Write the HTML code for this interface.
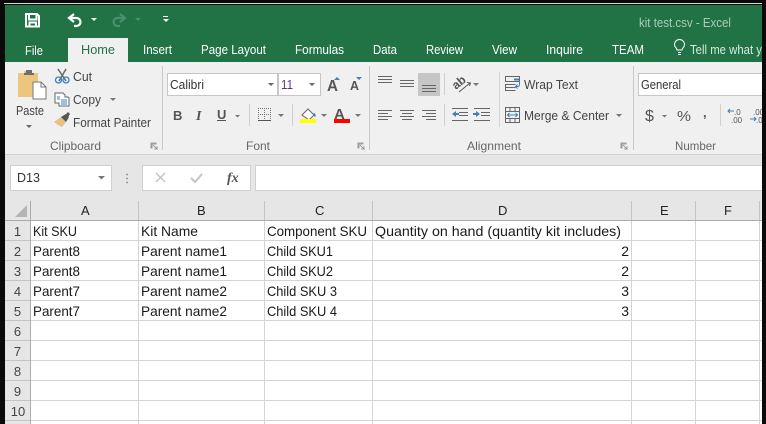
<!DOCTYPE html>
<html><head><meta charset="utf-8">
<style>
html,body{margin:0;padding:0;background:#000;width:766px;height:424px;overflow:hidden}
svg{display:block}
text{font-family:"Liberation Sans",sans-serif;font-size:12px;fill:#262626}
.r{fill:#444;font-size:13px}
.w{fill:#fff;font-size:13px}
.g{fill:#666;font-size:12px}
.c{fill:#1a1a1a;font-size:14px}
.h{fill:#222;font-size:13px}
</style></head><body>
<svg width="766" height="424" viewBox="0 0 766 424" xmlns="http://www.w3.org/2000/svg" shape-rendering="crispEdges">
<rect width="766" height="424" fill="#0a0a0a"/>
<rect x="4" y="3" width="758" height="1" fill="#d8d8d8"/>
<rect x="5" y="5" width="757" height="57" fill="#217346"/>
<rect x="5" y="62" width="757" height="92" fill="#f0f0f0"/>
<rect x="5" y="154" width="757" height="1" fill="#d2d2d2"/>
<rect x="5" y="155" width="757" height="46" fill="#e6e6e6"/>
<rect x="68" y="38" width="60" height="24" fill="#f0f0f0"/>

<g shape-rendering="auto">
<!-- save -->
<path d="M26 14h11l2 2v10.500H26z M29 14v5.500h7.500V14 M29.500 26.500v-4h6.500v4" fill="none" stroke="#fff" stroke-width="2"/>
<!-- undo -->
<path d="M74 14l-5 4 5 4 M69 18h7.500a4 4 0 0 1 0 8H74" fill="none" stroke="#fff" stroke-width="2.200"/>
<path d="M91 18h6l-3 3z" fill="#fff"/>
<path d="M120 14l5 4-5 4 M125 18h-7.500a4 4 0 0 0 0 8h2.500" fill="none" stroke="#4c8f6c" stroke-width="2.200"/>
<path d="M135 18h6l-3 3z" fill="#4c8f6c"/>
<path d="M163 16h5v1h-5z M163 19h6l-3 3z" fill="#fff"/>
<text x="639" y="27" style="fill:#a9cdb9;font-size:13px" textLength="92" lengthAdjust="spacingAndGlyphs">kit test.csv - Excel</text>

<text class="w" x="25" y="55" textLength="18" lengthAdjust="spacingAndGlyphs">File</text>
<text x="81" y="54" style="fill:#217346;font-size:13px" textLength="34" lengthAdjust="spacingAndGlyphs">Home</text>
<text class="w" x="143" y="54" textLength="29" lengthAdjust="spacingAndGlyphs">Insert</text>
<text class="w" x="201" y="54" textLength="65" lengthAdjust="spacingAndGlyphs">Page Layout</text>
<text class="w" x="295" y="54" textLength="49" lengthAdjust="spacingAndGlyphs">Formulas</text>
<text class="w" x="373" y="54" textLength="24" lengthAdjust="spacingAndGlyphs">Data</text>
<text class="w" x="426" y="54" textLength="37" lengthAdjust="spacingAndGlyphs">Review</text>
<text class="w" x="492" y="54" textLength="25" lengthAdjust="spacingAndGlyphs">View</text>
<text class="w" x="546" y="54" textLength="37" lengthAdjust="spacingAndGlyphs">Inquire</text>
<text class="w" x="612" y="54" textLength="32" lengthAdjust="spacingAndGlyphs">TEAM</text>
<path d="M678 54.500h3 M678 52.500h3 M677 50c0-2-2.500-2.500-2.500-5.500a5 5 0 0 1 10 0c0 3-2.500 3.500-2.500 5.500z" fill="none" stroke="#fff" stroke-width="1"/>
<text x="690" y="54" style="fill:#d8e8df;font-size:13px" textLength="72" lengthAdjust="spacingAndGlyphs">Tell me what y</text>

<!-- Paste -->
<path d="M18 73h6v-2h8v2h6v9H33v15H18z" fill="#ecc67f"/>
<path d="M26 70h6v3h2v2H24v-2h2z" fill="#6d6d6d"/>
<path d="M33 82h8l5 5v12H33z" fill="#fff" stroke="#777" stroke-width="1"/>
<path d="M41 82v5h5" fill="none" stroke="#777"/>
<text class="r" x="16" y="115" textLength="28" lengthAdjust="spacingAndGlyphs">Paste</text>
<path d="M26 125h6l-3 3z" fill="#666"/>

<!-- Cut -->
<path d="M58 69l8 12 M66 69l-7 12" stroke="#666" stroke-width="1.500" fill="none"/>
<circle cx="58.500" cy="80" r="3" fill="none" stroke="#3f7fbf" stroke-width="1.300"/>
<circle cx="66" cy="80" r="3" fill="none" stroke="#3f7fbf" stroke-width="1.300"/>
<text class="r" x="73" y="81" textLength="19" lengthAdjust="spacingAndGlyphs">Cut</text>
<!-- Copy -->
<path d="M55 93h8l2 2v2h3l1 1v8h-10v-3h-4z" fill="#fff" stroke="#666" stroke-width="1"/>
<path d="M57 97h3 M57 99h3 M61 100h6 M61 102h6 M61 104h6" stroke="#3f7fbf" stroke-width="1" fill="none"/>
<text class="r" x="73" y="104" textLength="28" lengthAdjust="spacingAndGlyphs">Copy</text>
<path d="M110 98h6l-3 3z" fill="#777"/>
<!-- Format painter -->
<path d="M54 122l7-5 5 5-4 5-4-2z" fill="#e8c184"/>
<path d="M61 117l5-3 3 3-3 5z" fill="#555"/>
<path d="M65 115l3-3 2 2-2 3z" fill="#555"/>
<text class="r" x="73" y="127" textLength="78" lengthAdjust="spacingAndGlyphs">Format Painter</text>
<text class="g" x="50" y="150" textLength="51" lengthAdjust="spacingAndGlyphs">Clipboard</text>
<path d="M151 143h5v1h-4v4h-1z M153 145l4 4h-3 M157 146v3" fill="none" stroke="#888" stroke-width=".8"/>
</g>

<!-- separators -->
<rect x="162" y="66" width="1" height="84" fill="#c8c8c8"/>
<rect x="369" y="66" width="1" height="84" fill="#c8c8c8"/>
<rect x="633" y="66" width="1" height="84" fill="#c8c8c8"/>
<rect x="499" y="72" width="1" height="55" fill="#d4d4d4"/>
<rect x="444" y="73" width="1" height="22" fill="#d0d0d0"/>
<rect x="444" y="104" width="1" height="22" fill="#d0d0d0"/>
<rect x="249" y="104" width="1" height="22" fill="#d0d0d0"/>
<rect x="292" y="104" width="1" height="22" fill="#d0d0d0"/>
<rect x="720" y="104" width="1" height="22" fill="#d0d0d0"/>

<!-- font boxes -->
<rect x="167.500" y="73.500" width="110" height="22" fill="#fff" stroke="#c6c6c6"/>
<rect x="278.500" y="73.500" width="42" height="22" fill="#fff" stroke="#c6c6c6"/>
<rect x="638.500" y="73.500" width="130" height="22" fill="#fff" stroke="#c6c6c6"/>

<g shape-rendering="auto">
<text x="170" y="89" style="fill:#333;font-size:13px" textLength="34" lengthAdjust="spacingAndGlyphs">Calibri</text>
<path d="M268 83h6l-3 3z M309 83h6l-3 3z" fill="#666"/>
<text x="281" y="89" style="fill:#5b3a7a;font-size:13px" textLength="12" lengthAdjust="spacingAndGlyphs">11</text>
<text x="327" y="91" style="fill:#555;font-size:16px;font-weight:bold" textLength="11" lengthAdjust="spacingAndGlyphs">A</text>
<path d="M334 80h6l-3-3z" fill="#3f7fbf"/>
<text x="350" y="90" style="fill:#555;font-size:13px;font-weight:bold" textLength="9" lengthAdjust="spacingAndGlyphs">A</text>
<path d="M356 77h6l-3 3z" fill="#3f7fbf"/>
<text x="173" y="120" style="fill:#555;font-size:13px;font-weight:bold">B</text>
<text x="196" y="120" style="fill:#555;font-size:14px;font-style:italic;font-family:'Liberation Serif',serif;font-weight:bold">I</text>
<text x="217" y="119" style="fill:#555;font-size:13px;font-weight:bold">U</text>
<rect x="217" y="120" width="9" height="1" fill="#555"/>
<path d="M235 115h5l-2.500 2.500z M278 114h6l-3 3z M321 114h6l-3 3z M355 114h6l-3 3z" fill="#777"/>
<path d="M258.500 108v13M264.500 108v13M270.500 108v13M258 108.500h13M258 114.500h13" stroke="#777" stroke-width="1" stroke-dasharray="1 1" fill="none"/>
<rect x="258" y="120" width="13" height="1" fill="#555"/>
<path d="M302 115l6-6 6 6-5 5z" fill="#fff" stroke="#666" stroke-width="1"/>
<path d="M314 113c2 1 2 3 1 4l-2-2z" fill="#3f7fbf"/>
<rect x="300" y="119" width="16" height="4" fill="#ffff00"/>
<text x="334" y="119" style="fill:#555;font-size:15px;font-weight:bold">A</text>
<rect x="334" y="119" width="16" height="4" fill="#ff0000"/>
<text class="g" x="246" y="150" textLength="24" lengthAdjust="spacingAndGlyphs">Font</text>
<path d="M358 143h5v1h-4v4h-1z M360 145l4 4h-3 M364 146v3" fill="none" stroke="#888" stroke-width=".8"/>
</g>

<!-- alignment -->
<rect x="418" y="73" width="22" height="23" fill="#c6c6c6"/>
<g fill="#666">
<rect x="378" y="76" width="14" height="1"/><rect x="378" y="79" width="14" height="1"/><rect x="378" y="82" width="14" height="1"/>
<rect x="400" y="80" width="14" height="1"/><rect x="400" y="83" width="14" height="1"/><rect x="400" y="86" width="14" height="1"/>
<rect x="422" y="85" width="14" height="1"/><rect x="422" y="88" width="14" height="1"/><rect x="422" y="91" width="14" height="1"/>
<rect x="378" y="110" width="14" height="1"/><rect x="378" y="113" width="10" height="1"/><rect x="378" y="116" width="14" height="1"/><rect x="378" y="119" width="10" height="1"/>
<rect x="400" y="110" width="14" height="1"/><rect x="402" y="113" width="10" height="1"/><rect x="400" y="116" width="14" height="1"/><rect x="402" y="119" width="10" height="1"/>
<rect x="422" y="110" width="14" height="1"/><rect x="426" y="113" width="10" height="1"/><rect x="422" y="116" width="14" height="1"/><rect x="426" y="119" width="10" height="1"/>
<rect x="452" y="108" width="16" height="1"/><rect x="459" y="112" width="9" height="1"/><rect x="459" y="115" width="9" height="1"/><rect x="452" y="120" width="16" height="1"/>
<rect x="474" y="108" width="16" height="1"/><rect x="481" y="112" width="9" height="1"/><rect x="481" y="115" width="9" height="1"/><rect x="474" y="120" width="16" height="1"/>
</g>
<g shape-rendering="auto">
<path d="M452 114l4-3v2h3v2h-3v2z" fill="#3f7fbf"/>
<path d="M480 114l-4-3v2h-3v2h3v2z" fill="#3f7fbf"/>
<text x="0" y="0" transform="translate(456,90) rotate(-40)" style="fill:#555;font-size:12px;font-weight:bold">ab</text>
<path d="M459 92l11-9 M467 82.500l3.500 .5-1 3" fill="none" stroke="#555" stroke-width="1"/>
<path d="M473 83h6l-3 3z M616 114h6l-3 3z" fill="#777"/>
<!-- wrap -->
<path d="M505.500 76.500h14v5h-14z M505.500 84.500h10 M505.500 87.500h10 M505.500 90.500h10 M505.500 84v7" fill="none" stroke="#666" stroke-width="1"/>
<path d="M514 80h5 M514 79h6" stroke="#3f7fbf" stroke-width="1"/>
<path d="M519.500 81v3.500c0 1.500-1 2-2 2h-2 M517.500 84.500l-2 2 2 2" fill="none" stroke="#3f7fbf" stroke-width="1"/>
<text class="r" x="524" y="89" textLength="54" lengthAdjust="spacingAndGlyphs">Wrap Text</text>
<!-- merge -->
<path d="M505.500 107.500h14v15h-14z M505.500 111.500h14 M505.500 118.500h14 M510 107.500v4 M515 107.500v4 M510 118.500v4 M515 118.500v4" fill="none" stroke="#666" stroke-width="1"/>
<path d="M507.500 115h10 M509.500 113l-2 2 2 2 M515.500 113l2 2-2 2" fill="none" stroke="#3f7fbf" stroke-width="1"/>
<text class="r" x="524" y="120" textLength="85" lengthAdjust="spacingAndGlyphs">Merge &amp; Center</text>
<text class="g" x="467" y="150" textLength="54" lengthAdjust="spacingAndGlyphs">Alignment</text>
<path d="M621 143h5v1h-4v4h-1z M623 145l4 4h-3 M627 146v3" fill="none" stroke="#888" stroke-width=".8"/>
<!-- number -->
<text x="641" y="89" style="fill:#333;font-size:13px" textLength="40" lengthAdjust="spacingAndGlyphs">General</text>
<text x="645" y="121" style="fill:#555;font-size:16px">$</text>
<path d="M662 115h5l-2.500 2.500z" fill="#777"/>
<text x="677" y="121" style="fill:#555;font-size:15px" textLength="14" lengthAdjust="spacingAndGlyphs">%</text>
<text x="703" y="117" style="fill:#555;font-size:13px;font-weight:bold">,</text>
<text x="734" y="115" style="fill:#555;font-size:8px">.0</text>
<text x="731" y="123" style="fill:#555;font-size:8px">.00</text>
<path d="M734 111h-6 M730 109l-2 2 2 2" fill="none" stroke="#3f7fbf" stroke-width="1"/>
<text x="753" y="115" style="fill:#555;font-size:8px">.00</text>
<text x="756" y="123" style="fill:#555;font-size:8px">.0</text>
<path d="M750 119h6 M754 117l2 2-2 2" fill="none" stroke="#3f7fbf" stroke-width="1"/>
<text class="g" x="675" y="150" textLength="41" lengthAdjust="spacingAndGlyphs">Number</text>
</g>

<!-- formula bar -->
<rect x="10.500" y="165.500" width="101" height="25" fill="#fff" stroke="#d0d0d0"/>
<rect x="142.500" y="165.500" width="108" height="25" fill="#fff" stroke="#d0d0d0"/>
<rect x="255.500" y="165.500" width="520" height="25" fill="#fff" stroke="#d0d0d0"/>
<g shape-rendering="auto">
<text x="17" y="182" style="fill:#333;font-size:13px" textLength="23" lengthAdjust="spacingAndGlyphs">D13</text>
<path d="M98 176h7l-3.500 3.500z" fill="#777"/>
<path d="M126 174.500h2 M126 178.500h2 M126 182.500h2" stroke="#999" stroke-width="1.500"/>
<path d="M156 173l9 9 M165 173l-9 9" stroke="#c4c4c4" stroke-width="1.500" fill="none"/>
<path d="M191 178l4 4 7-8" stroke="#c4c4c4" stroke-width="2" fill="none"/>
<text x="227" y="182" style="fill:#555;font-size:14px;font-style:italic;font-family:'Liberation Serif',serif;font-weight:bold">fx</text>
</g>

<!-- sheet -->
<rect x="5" y="201" width="757" height="223" fill="#fff"/>
<rect x="5" y="201" width="757" height="19" fill="#e6e6e6"/>
<rect x="5" y="220" width="25" height="204" fill="#e6e6e6"/>
<path d="M15 217L27 205V217z" fill="#b4b4b4" shape-rendering="auto"/>
<rect x="5" y="220" width="757" height="1" fill="#ababab"/>
<rect x="30" y="201" width="1" height="223" fill="#ababab"/>

<g fill="#d4d4d4">
<rect x="31" y="240" width="731" height="1"/><rect x="31" y="260" width="731" height="1"/><rect x="31" y="280" width="731" height="1"/>
<rect x="31" y="300" width="731" height="1"/><rect x="31" y="320" width="731" height="1"/><rect x="31" y="340" width="731" height="1"/>
<rect x="31" y="360" width="731" height="1"/><rect x="31" y="380" width="731" height="1"/><rect x="31" y="400" width="731" height="1"/><rect x="31" y="420" width="731" height="1"/>
<rect x="138" y="221" width="1" height="203"/><rect x="264" y="221" width="1" height="203"/><rect x="372" y="221" width="1" height="203"/>
<rect x="631" y="221" width="1" height="203"/><rect x="695" y="221" width="1" height="203"/><rect x="759" y="221" width="1" height="203"/>
</g>
<g fill="#c4c4c4">
<rect x="5" y="240" width="25" height="1"/><rect x="5" y="260" width="25" height="1"/><rect x="5" y="280" width="25" height="1"/>
<rect x="5" y="300" width="25" height="1"/><rect x="5" y="320" width="25" height="1"/><rect x="5" y="340" width="25" height="1"/>
<rect x="5" y="360" width="25" height="1"/><rect x="5" y="380" width="25" height="1"/><rect x="5" y="400" width="25" height="1"/><rect x="5" y="420" width="25" height="1"/>
<rect x="138" y="201" width="1" height="19"/><rect x="264" y="201" width="1" height="19"/><rect x="372" y="201" width="1" height="19"/>
<rect x="631" y="201" width="1" height="19"/><rect x="695" y="201" width="1" height="19"/><rect x="759" y="201" width="1" height="19"/>
</g>

<g shape-rendering="auto">
<text class="h" x="81" y="215">A</text><text class="h" x="197" y="215">B</text><text class="h" x="315" y="215">C</text>
<text class="h" x="498" y="215">D</text><text class="h" x="660" y="215">E</text><text class="h" x="724" y="215">F</text>
<g text-anchor="middle">
<text class="r" x="17.500" y="236">1</text><text class="r" x="17.500" y="256">2</text><text class="r" x="17.500" y="276">3</text>
<text class="r" x="17.500" y="296">4</text><text class="r" x="17.500" y="316">5</text><text class="r" x="17.500" y="336">6</text>
<text class="r" x="17.500" y="356">7</text><text class="r" x="17.500" y="376">8</text><text class="r" x="17.500" y="396">9</text>
<text class="r" x="18" y="416">10</text>
</g>

<text class="c" x="33" y="236" textLength="44" lengthAdjust="spacingAndGlyphs">Kit SKU</text>
<text class="c" x="141" y="236" textLength="57" lengthAdjust="spacingAndGlyphs">Kit Name</text>
<text class="c" x="267" y="236" textLength="100" lengthAdjust="spacingAndGlyphs">Component SKU</text>
<text class="c" x="375" y="236" textLength="246" lengthAdjust="spacingAndGlyphs">Quantity on hand (quantity kit includes)</text>

<text class="c" x="33" y="256" textLength="47" lengthAdjust="spacingAndGlyphs">Parent8</text>
<text class="c" x="141" y="256" textLength="86" lengthAdjust="spacingAndGlyphs">Parent name1</text>
<text class="c" x="267" y="256" textLength="66" lengthAdjust="spacingAndGlyphs">Child SKU1</text>
<text class="c" x="629" y="256" text-anchor="end">2</text>

<text class="c" x="33" y="276" textLength="47" lengthAdjust="spacingAndGlyphs">Parent8</text>
<text class="c" x="141" y="276" textLength="86" lengthAdjust="spacingAndGlyphs">Parent name1</text>
<text class="c" x="267" y="276" textLength="66" lengthAdjust="spacingAndGlyphs">Child SKU2</text>
<text class="c" x="629" y="276" text-anchor="end">2</text>

<text class="c" x="33" y="296" textLength="47" lengthAdjust="spacingAndGlyphs">Parent7</text>
<text class="c" x="141" y="296" textLength="86" lengthAdjust="spacingAndGlyphs">Parent name2</text>
<text class="c" x="267" y="296" textLength="70" lengthAdjust="spacingAndGlyphs">Child SKU 3</text>
<text class="c" x="629" y="296" text-anchor="end">3</text>

<text class="c" x="33" y="316" textLength="47" lengthAdjust="spacingAndGlyphs">Parent7</text>
<text class="c" x="141" y="316" textLength="86" lengthAdjust="spacingAndGlyphs">Parent name2</text>
<text class="c" x="267" y="316" textLength="70" lengthAdjust="spacingAndGlyphs">Child SKU 4</text>
<text class="c" x="629" y="316" text-anchor="end">3</text>
</g>

<rect x="762" y="0" width="4" height="424" fill="#0a0a0a"/>
</svg>
</body></html>
